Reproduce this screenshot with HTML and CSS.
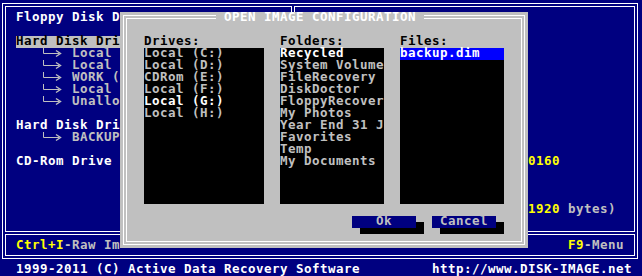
FILE: index.html
```html
<!DOCTYPE html>
<html>
<head>
<meta charset="utf-8">
<link rel="stylesheet" href="styles.css">
</head>
<body>
<div class="screen">
  <div class="frame">
    <div class="outer">
      <div class="main">
        <div class="left">
          <div class="row w">Floppy Disk D</div>
          <div class="row"></div>
          <div class="row hl">Hard Disk Dri</div>
          <div class="row"><svg class="arrow" width="24" height="12" viewBox="0 0 24 12"><path d="M3.5 0V5.5H19" fill="none" stroke="#c0c0c0" stroke-width="1"/><path d="M16 2.5L20.5 5.5L16 8.5" fill="none" stroke="#c0c0c0" stroke-width="1.4"/></svg><span> Local</span></div>
          <div class="row"><svg class="arrow" width="24" height="12" viewBox="0 0 24 12"><path d="M3.5 0V5.5H19" fill="none" stroke="#c0c0c0" stroke-width="1"/><path d="M16 2.5L20.5 5.5L16 8.5" fill="none" stroke="#c0c0c0" stroke-width="1.4"/></svg><span> Local</span></div>
          <div class="row"><svg class="arrow" width="24" height="12" viewBox="0 0 24 12"><path d="M3.5 0V5.5H19" fill="none" stroke="#c0c0c0" stroke-width="1"/><path d="M16 2.5L20.5 5.5L16 8.5" fill="none" stroke="#c0c0c0" stroke-width="1.4"/></svg><span> WORK (</span></div>
          <div class="row"><svg class="arrow" width="24" height="12" viewBox="0 0 24 12"><path d="M3.5 0V5.5H19" fill="none" stroke="#c0c0c0" stroke-width="1"/><path d="M16 2.5L20.5 5.5L16 8.5" fill="none" stroke="#c0c0c0" stroke-width="1.4"/></svg><span> Local</span></div>
          <div class="row"><svg class="arrow" width="24" height="12" viewBox="0 0 24 12"><path d="M3.5 0V5.5H19" fill="none" stroke="#c0c0c0" stroke-width="1"/><path d="M16 2.5L20.5 5.5L16 8.5" fill="none" stroke="#c0c0c0" stroke-width="1.4"/></svg><span> Unallo</span></div>
          <div class="row"></div>
          <div class="row w">Hard Disk Dri</div>
          <div class="row"><svg class="arrow" width="24" height="12" viewBox="0 0 24 12"><path d="M3.5 0V5.5H19" fill="none" stroke="#c0c0c0" stroke-width="1"/><path d="M16 2.5L20.5 5.5L16 8.5" fill="none" stroke="#c0c0c0" stroke-width="1.4"/></svg><span> BACKUP</span></div>
          <div class="row"></div>
          <div class="row w">CD-Rom Drive</div>
        </div>
        <div class="divider"></div>
        <div class="right">
          <div class="row"></div>
          <div class="row"></div>
          <div class="row"></div>
          <div class="row"></div>
          <div class="row"></div>
          <div class="row"></div>
          <div class="row"></div>
          <div class="row"></div>
          <div class="row"></div>
          <div class="row"></div>
          <div class="row"></div>
          <div class="row"></div>
          <div class="row val"><span class="y">0160</span></div>
          <div class="row"></div>
          <div class="row"></div>
          <div class="row"></div>
          <div class="row val"><span class="y">1920</span><span> bytes)</span></div>
        </div>
      </div>
      <div class="status">
        <div class="row"><span class="y">Ctrl+I</span><span>-Raw Im</span></div>
        <div class="row"><span class="y">F9</span><span>-Menu</span></div>
      </div>
    </div>
  </div>
  <div class="bottom">
    <span> 1999-2011 (C) Active Data Recovery Software</span>
    <span>http://www.DISK-IMAGE.net</span>
  </div>

  <div class="dialog">
    <div class="d1">
      <div class="d2">
        <div class="cols">
          <div class="col col1">
            <div class="label">Drives:</div>
            <div class="list">
              <div class="item">Local (C:)</div>
              <div class="item">Local (D:)</div>
              <div class="item">CDRom (E:)</div>
              <div class="item">Local (F:)</div>
              <div class="item w">Local (G:)</div>
              <div class="item">Local (H:)</div>
            </div>
          </div>
          <div class="col col2">
            <div class="label">Folders:</div>
            <div class="list">
              <div class="item w">Recycled</div>
              <div class="item">System Volume</div>
              <div class="item">FileRecovery</div>
              <div class="item">DiskDoctor</div>
              <div class="item">FloppyRecover</div>
              <div class="item">My Photos</div>
              <div class="item">Year End 31 J</div>
              <div class="item">Favorites</div>
              <div class="item">Temp</div>
              <div class="item">My Documents</div>
            </div>
          </div>
          <div class="col col3">
            <div class="label">Files:</div>
            <div class="list">
              <div class="item sel">backup.dim</div>
            </div>
          </div>
        </div>
        <div class="buttons">
          <div class="btn">Ok</div>
          <div class="btn">Cancel</div>
        </div>
      </div>
    </div>
    <div class="title"> OPEN IMAGE CONFIGURATION </div>
  </div>
</div>
</body>
</html>
```
FILE: styles.css
```css
* { box-sizing: border-box; margin: 0; padding: 0; }
html, body { background: #000080; }
body {
  width: 642px;
  height: 276px;
  overflow: hidden;
  font-family: "DejaVu Sans Mono", monospace;
  font-weight: bold;
  font-size: 12.5px;
  letter-spacing: 0.474px;
  color: #c0c0c0;
}
.screen { position: relative; width: 640px; height: 276px; display: flex; flex-direction: column; }
.frame { height: 264px; padding: 3px 2px 5px 2px; }
.outer {
  height: 256px;
  border: 1px solid #fff;
  padding: 2px;
  display: flex;
  flex-direction: column;
  gap: 2px;
}
.main { height: 226px; border: 1px solid #fff; display: flex; }
.left { width: 285px; padding: 5px 0 0 10px; }
.left .arrow { margin-left: 24px; }
.divider {
  width: 4px;
  margin-top: -1px;
  border-left: 1px solid #fff;
  border-right: 1px solid #fff;
  background: #000080;
}
.right { flex: 1; padding: 5px 0 0 1px; }
.row { display: flex; height: 12px; line-height: 10px; white-space: pre; }
.val { padding-left: 232px; }
.arrow { flex: none; display: block; }
.hl { background: #c0c0c0; color: #000; }
.w { color: #fff; }
.y { color: #ffff00; }
.status {
  height: 22px;
  border: 1px solid #fff;
  display: flex;
  justify-content: space-between;
  padding: 5px 10px 0 10px;
}
.bottom {
  height: 12px;
  line-height: 10px;
  display: flex;
  justify-content: space-between;
  padding: 0 8px;
  color: #fff;
  white-space: pre;
}
.dialog {
  position: absolute;
  left: 120px;
  top: 12px;
  width: 408px;
  height: 236px;
  background: #c0c0c0;
  padding: 3px;
}
.d1 { height: 100%; border: 1px solid #fff; padding: 2px; }
.d2 { height: 100%; border: 1px solid #fff; padding: 17px 0 0 17px; }
.title {
  position: absolute;
  left: 96px;
  top: 0;
  height: 12px;
  line-height: 10px;
  background: #c0c0c0;
  color: #fff;
  white-space: pre;
}
.cols { display: flex; gap: 16px; }
.col1 { width: 120px; }
.col2, .col3 { width: 104px; }
.label { height: 12px; line-height: 10px; color: #000; }
.list { height: 156px; background: #000; }
.item { height: 12px; line-height: 10px; white-space: pre; }
.item.w { color: #fff; }
.sel { background: #0000ff; color: #fff; }
.buttons { display: flex; gap: 16px; margin: 12px 0 0 208px; }
.btn {
  width: 64px;
  height: 12px;
  line-height: 10px;
  text-align: center;
  background: #000080;
  color: #c0c0c0;
  box-shadow: 8px 6px 0 #000;
  white-space: pre;
}
```
